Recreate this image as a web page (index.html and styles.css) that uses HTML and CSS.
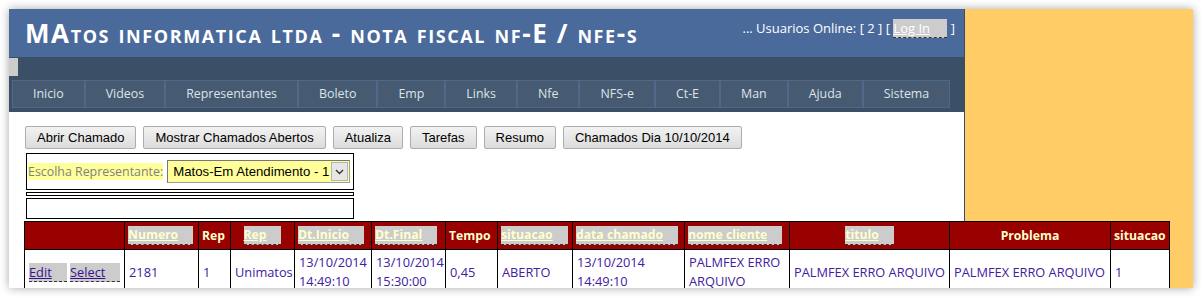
FILE: index.html
```html
<!DOCTYPE html>
<html>
<head>
<meta charset="utf-8">
<link rel="stylesheet" href="styles.css">
</head>
<body>
<div class="window">
  <div class="main">
    <header class="top">
      <h1 class="title">MAtos informatica ltda - nota fiscal nf-E / nfe-s</h1>
      <div class="online">... Usuarios Online: [ 2 ] [ <a class="login" href="#">Log In</a> ]</div>
    </header>
    <div class="bar">
      <div class="grip"></div>
      <nav class="menu">
        <a href="#">Inicio</a><a href="#">Videos</a><a href="#">Representantes</a><a href="#">Boleto</a><a href="#">Emp</a><a href="#">Links</a><a href="#">Nfe</a><a href="#">NFS-e</a><a href="#">Ct-E</a><a href="#">Man</a><a href="#">Ajuda</a><a href="#">Sistema</a>
      </nav>
    </div>
    <div class="content">
      <div class="buttons">
        <button>Abrir Chamado</button>
        <button>Mostrar Chamados Abertos</button>
        <button>Atualiza</button>
        <button>Tarefas</button>
        <button>Resumo</button>
        <button>Chamados Dia 10/10/2014</button>
      </div>
      <div class="box pick">
        <span class="lbl">Escolha Representante:</span>
        <span class="sel"><span class="seltext">Matos-Em Atendimento - 1</span><span class="arrow"><svg width="9" height="6" viewBox="0 0 9 6"><path d="M1 1 L4.5 4.5 L8 1" fill="none" stroke="#333" stroke-width="1.4"/></svg></span></span>
      </div>
      <div class="box thin"></div>
      <div class="box empty"></div>
      <table class="grid">
        <colgroup>
          <col style="width:100px"><col style="width:74px"><col style="width:32px"><col style="width:64px"><col style="width:77px"><col style="width:74px"><col style="width:52px"><col style="width:75px"><col style="width:112px"><col style="width:105px"><col style="width:160px"><col style="width:161px"><col style="width:59px">
        </colgroup>
        <thead>
          <tr>
            <th></th>
            <th class="l"><a href="#">Numero</a></th>
            <th class="l">Rep</th>
            <th><a href="#">Rep</a></th>
            <th class="l"><a href="#">Dt.Inicio</a></th>
            <th class="l"><a href="#">Dt.Final</a></th>
            <th class="l">Tempo</th>
            <th class="l"><a href="#">situacao</a></th>
            <th class="l"><a href="#">data chamado</a></th>
            <th class="l"><a href="#">nome cliente</a></th>
            <th><a href="#">titulo</a></th>
            <th>Problema</th>
            <th class="l">situacao</th>
          </tr>
        </thead>
        <tbody>
          <tr>
            <td class="act"><a href="#">Edit</a> <a href="#">Select</a></td>
            <td>2181</td>
            <td>1</td>
            <td>Unimatos</td>
            <td>13/10/2014<br>14:49:10</td>
            <td>13/10/2014<br>15:30:00</td>
            <td>0,45</td>
            <td>ABERTO</td>
            <td>13/10/2014<br>14:49:10</td>
            <td>PALMFEX ERRO<br>ARQUIVO</td>
            <td>PALMFEX ERRO ARQUIVO</td>
            <td>PALMFEX ERRO ARQUIVO</td>
            <td>1</td>
          </tr>
        </tbody>
      </table>
    </div>
  </div>
</div>
</body>
</html>
```
FILE: styles.css
```css
* { box-sizing: border-box; }
html, body { background: #ffffff; }
body { margin: 0; padding: 9px; }

.window {
  width: 1184px;
  height: 279px;
  background: #ffcc66;
  box-shadow: 0 0 9px rgba(0,0,0,0.35);
  overflow: hidden;
  font-family: "Open Sans", "Noto Sans", sans-serif;
}

.main {
  width: 956px;
  height: 100%;
  background: #ffffff;
  border-right: 1px solid #3b4f66;
}

.top {
  height: 48px;
  background: #4a6a9c;
  display: flex;
  justify-content: space-between;
  align-items: flex-start;
  padding: 0 9px 0 16px;
}

.title {
  margin: 7px 0 0 0;
  font-size: 26px;
  font-weight: bold;
  font-variant: small-caps;
  color: #ffffff;
  letter-spacing: 1.6px;
  line-height: 34px;
  white-space: nowrap;
}

.online {
  margin-top: 9px;
  font-size: 13px;
  color: #ffffff;
  line-height: 20px;
  white-space: nowrap;
}
.login {
  display: inline-block;
  width: 54px;
  background: #cccccc;
  color: #ffffff;
  border-bottom: 1px dashed #333;
  line-height: 18px;
}

.bar {
  height: 55px;
  background: #3b4f66;
  padding-top: 1px;
}
.grip {
  width: 9px;
  height: 18px;
  background: #cccccc;
}
.menu {
  display: flex;
  margin: 4px 0 0 3px;
}
.menu a {
  display: block;
  height: 28px;
  line-height: 26px;
  padding: 0 20px;
  background: #465b72;
  border: 1px solid #52688a;
  color: #dde3ea;
  font-size: 12.4px;
  text-decoration: none;
}

.content {
  padding: 14px 0 0 16px;
}
.buttons {
  display: flex;
  gap: 7px;
}
.buttons button {
  height: 23px;
  padding: 0 11px;
  font-family: "Liberation Sans", Arial, sans-serif;
  font-size: 13px;
  color: #000;
  background: linear-gradient(#f2f2f2, #dcdcdc);
  border: 1px solid #adadad;
  border-radius: 2px;
}

.box {
  width: 328px;
  margin-left: 1px;
  border: 1px solid #000;
}
.pick {
  margin-top: 4px;
  height: 37px;
  display: flex;
  align-items: center;
  padding: 0 1px;
  gap: 4px;
}
.lbl {
  flex-shrink: 0;
  white-space: nowrap;
  background: #ffff99;
  color: #808080;
  font-size: 12.4px;
  line-height: 17px;
}
.sel {
  flex-shrink: 0;
  display: flex;
  align-items: center;
  width: 183px;
  height: 23px;
  background: #ffff99;
  border: 1px solid #a0a0a0;
  border-top-color: #777;
  border-left-color: #777;
}
.seltext {
  flex: 1;
  padding-left: 5px;
  font-family: "Liberation Sans", Arial, sans-serif;
  font-size: 13.2px;
  color: #000;
  white-space: nowrap;
}
.arrow {
  width: 17px;
  height: 19px;
  margin-right: 1px;
  background: #e6e6e6;
  border: 1px solid #b5b5b5;
  display: flex;
  align-items: center;
  justify-content: center;
}
.thin {
  margin-top: 2px;
  height: 4px;
}
.empty {
  margin-top: 2px;
  height: 21px;
}

.grid {
  margin: 2px 0 0 -1px;
  width: 1145px;
  table-layout: fixed;
  border-collapse: collapse;
  border: 1px solid #000;
  font-size: 12.2px;
}
.grid th, .grid td {
  border: 1px solid #000;
  padding: 0 3px;
  white-space: nowrap;
  overflow: hidden;
}
.grid th {
  height: 28px;
  background: #990000;
  color: #ffffcc;
  font-weight: bold;
  text-align: center;
}
.grid th.l { text-align: left; }
.grid th a, .grid td.act a {
  display: inline-block;
  padding-right: 15px;
  background: #cccccc;
  border-bottom: 1px dashed #333;
  line-height: 18px;
}
.grid th a { color: #ffffcc; }
.grid td {
  height: 46px;
  padding: 3px 4px 4px;
  background: #ffffff;
  font-size: 12.8px;
  line-height: 19px;
  color: #4020a0;
  vertical-align: middle;
}
.grid td.act { padding-left: 4px; font-size: 12.8px; }
.grid td.act a { color: #3a0f90; }
```
